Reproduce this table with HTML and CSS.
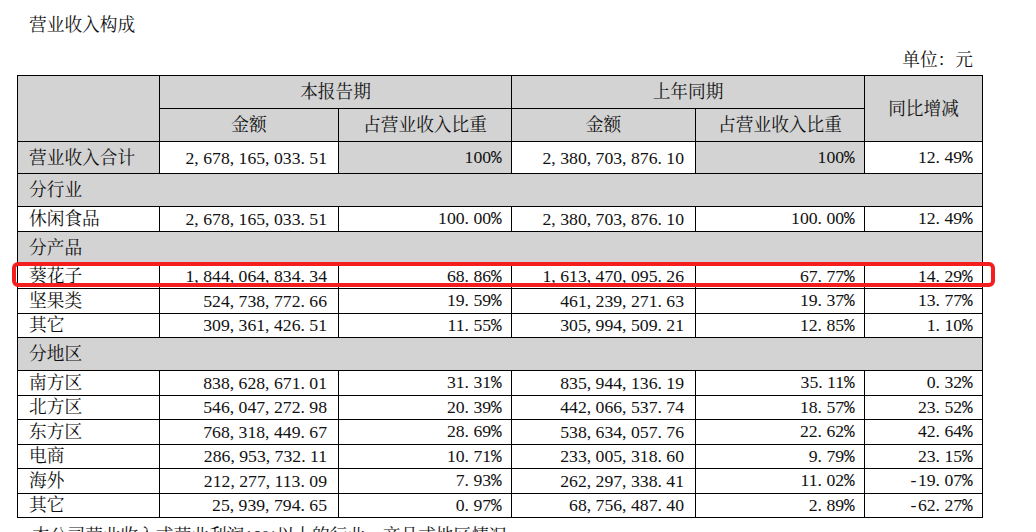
FILE: index.html
```html
<!DOCTYPE html>
<html lang="zh-CN">
<head>
<meta charset="utf-8">
<title>营业收入构成</title>
<link rel="stylesheet" href="styles.css">
</head>
<body>
<div class="page">
  <h1 class="title">营业收入构成</h1>
  <div class="unit">单位：元</div>
  <table class="report">
    <colgroup>
      <col class="c1"><col class="c2"><col class="c3"><col class="c4"><col class="c5"><col class="c6">
    </colgroup>
    <tr class="h">
      <td class="g" rowspan="2"></td>
      <td class="g ctr" colspan="2">本报告期</td>
      <td class="g ctr" colspan="2">上年同期</td>
      <td class="g ctr" rowspan="2">同比增减</td>
    </tr>
    <tr class="h">
      <td class="g ctr">金额</td>
      <td class="g ctr">占营业收入比重</td>
      <td class="g ctr">金额</td>
      <td class="g ctr">占营业收入比重</td>
    </tr>
    <tr class="t">
      <td class="g">营业收入合计</td>
      <td class="n">2<i>,</i>678<i>,</i>165<i>,</i>033<i>.</i>51</td>
      <td class="n g">100<i class="pc">%</i></td>
      <td class="n">2<i>,</i>380<i>,</i>703<i>,</i>876<i>.</i>10</td>
      <td class="n g">100<i class="pc">%</i></td>
      <td class="n">12<i>.</i>49<i class="pc">%</i></td>
    </tr>
    <tr class="grp"><td class="g" colspan="6">分行业</td></tr>
    <tr class="d">
      <td>休闲食品</td>
      <td class="n">2<i>,</i>678<i>,</i>165<i>,</i>033<i>.</i>51</td>
      <td class="n">100<i>.</i>00<i class="pc">%</i></td>
      <td class="n">2<i>,</i>380<i>,</i>703<i>,</i>876<i>.</i>10</td>
      <td class="n">100<i>.</i>00<i class="pc">%</i></td>
      <td class="n">12<i>.</i>49<i class="pc">%</i></td>
    </tr>
    <tr class="grp"><td class="g" colspan="6">分产品</td></tr>
    <tr class="d">
      <td>葵花子</td>
      <td class="n">1<i>,</i>844<i>,</i>064<i>,</i>834<i>.</i>34</td>
      <td class="n">68<i>.</i>86<i class="pc">%</i></td>
      <td class="n">1<i>,</i>613<i>,</i>470<i>,</i>095<i>.</i>26</td>
      <td class="n">67<i>.</i>77<i class="pc">%</i></td>
      <td class="n">14<i>.</i>29<i class="pc">%</i></td>
    </tr>
    <tr class="d">
      <td>坚果类</td>
      <td class="n">524<i>,</i>738<i>,</i>772<i>.</i>66</td>
      <td class="n">19<i>.</i>59<i class="pc">%</i></td>
      <td class="n">461<i>,</i>239<i>,</i>271<i>.</i>63</td>
      <td class="n">19<i>.</i>37<i class="pc">%</i></td>
      <td class="n">13<i>.</i>77<i class="pc">%</i></td>
    </tr>
    <tr class="d">
      <td>其它</td>
      <td class="n">309<i>,</i>361<i>,</i>426<i>.</i>51</td>
      <td class="n">11<i>.</i>55<i class="pc">%</i></td>
      <td class="n">305<i>,</i>994<i>,</i>509<i>.</i>21</td>
      <td class="n">12<i>.</i>85<i class="pc">%</i></td>
      <td class="n">1<i>.</i>10<i class="pc">%</i></td>
    </tr>
    <tr class="grp"><td class="g" colspan="6">分地区</td></tr>
    <tr class="d">
      <td>南方区</td>
      <td class="n">838<i>,</i>628<i>,</i>671<i>.</i>01</td>
      <td class="n">31<i>.</i>31<i class="pc">%</i></td>
      <td class="n">835<i>,</i>944<i>,</i>136<i>.</i>19</td>
      <td class="n">35<i>.</i>11<i class="pc">%</i></td>
      <td class="n">0<i>.</i>32<i class="pc">%</i></td>
    </tr>
    <tr class="d">
      <td>北方区</td>
      <td class="n">546<i>,</i>047<i>,</i>272<i>.</i>98</td>
      <td class="n">20<i>.</i>39<i class="pc">%</i></td>
      <td class="n">442<i>,</i>066<i>,</i>537<i>.</i>74</td>
      <td class="n">18<i>.</i>57<i class="pc">%</i></td>
      <td class="n">23<i>.</i>52<i class="pc">%</i></td>
    </tr>
    <tr class="d">
      <td>东方区</td>
      <td class="n">768<i>,</i>318<i>,</i>449<i>.</i>67</td>
      <td class="n">28<i>.</i>69<i class="pc">%</i></td>
      <td class="n">538<i>,</i>634<i>,</i>057<i>.</i>76</td>
      <td class="n">22<i>.</i>62<i class="pc">%</i></td>
      <td class="n">42<i>.</i>64<i class="pc">%</i></td>
    </tr>
    <tr class="d">
      <td>电商</td>
      <td class="n">286<i>,</i>953<i>,</i>732<i>.</i>11</td>
      <td class="n">10<i>.</i>71<i class="pc">%</i></td>
      <td class="n">233<i>,</i>005<i>,</i>318<i>.</i>60</td>
      <td class="n">9<i>.</i>79<i class="pc">%</i></td>
      <td class="n">23<i>.</i>15<i class="pc">%</i></td>
    </tr>
    <tr class="d">
      <td>海外</td>
      <td class="n">212<i>,</i>277<i>,</i>113<i>.</i>09</td>
      <td class="n">7<i>.</i>93<i class="pc">%</i></td>
      <td class="n">262<i>,</i>297<i>,</i>338<i>.</i>41</td>
      <td class="n">11<i>.</i>02<i class="pc">%</i></td>
      <td class="n"><i class="mn">-</i>19<i>.</i>07<i class="pc">%</i></td>
    </tr>
    <tr class="d">
      <td>其它</td>
      <td class="n">25<i>,</i>939<i>,</i>794<i>.</i>65</td>
      <td class="n">0<i>.</i>97<i class="pc">%</i></td>
      <td class="n">68<i>,</i>756<i>,</i>487<i>.</i>40</td>
      <td class="n">2<i>.</i>89<i class="pc">%</i></td>
      <td class="n"><i class="mn">-</i>62<i>.</i>27<i class="pc">%</i></td>
    </tr>
  </table>
  <p class="note">本公司营业收入或营业利润10%以上的行业、产品或地区情况</p>
  <div class="mark"></div>
</div>
</body>
</html>
```
FILE: styles.css
```css
html, body {
  margin: 0;
  padding: 0;
  background: #ffffff;
}

body {
  color: #111111;
  font-family: "Liberation Serif", "Noto Serif CJK SC", "Noto Sans CJK SC", serif;
  font-size: 17.7px;
  overflow: hidden;
  height: 532px;
}

.page {
  position: relative;
  padding: 13px 0 0 17px;
}

.title {
  margin: 0 0 0 12px;
  font-size: inherit;
  font-weight: normal;
  line-height: 24px;
}

.unit {
  width: 965px;
  box-sizing: border-box;
  margin-top: 11px;
  padding-right: 9px;
  text-align: right;
  line-height: 24px;
}

.report {
  margin-top: 3px;
  width: 965px;
  border-collapse: collapse;
  table-layout: fixed;
}

.c1 { width: 142px; }
.c2 { width: 179px; }
.c3 { width: 173px; }
.c4 { width: 184px; }
.c5 { width: 169px; }
.c6 { width: 118px; }

.report td {
  border: 1px solid #000000;
  padding: 0 11px;
  line-height: 20px;
  vertical-align: middle;
  white-space: nowrap;
  text-align: left;
}

.report tr.h { height: 33px; }
.report tr.t { height: 32px; }
.report tr.grp { height: 33px; }
.report tr.d { height: 24.5px; }

.report td.g { background: #d3d3d3; }
.report td.ctr { text-align: center; }
.report td.n { text-align: right; }

.n i {
  display: inline-block;
  width: 0.5em;
  font-style: normal;
  text-align: left;
}

.n i.pc {
  font-family: "Liberation Mono", monospace;
  letter-spacing: -1.7px;
  width: auto;
}

.n i.mn {
  text-align: center;
}

.note {
  margin: 6px 0 0 15px;
  line-height: 24px;
}

.mark {
  position: absolute;
  left: 12px;
  top: 262px;
  width: 983px;
  height: 25px;
  box-sizing: border-box;
  border: 4px solid #f41e1e;
  border-radius: 6px;
}
```
